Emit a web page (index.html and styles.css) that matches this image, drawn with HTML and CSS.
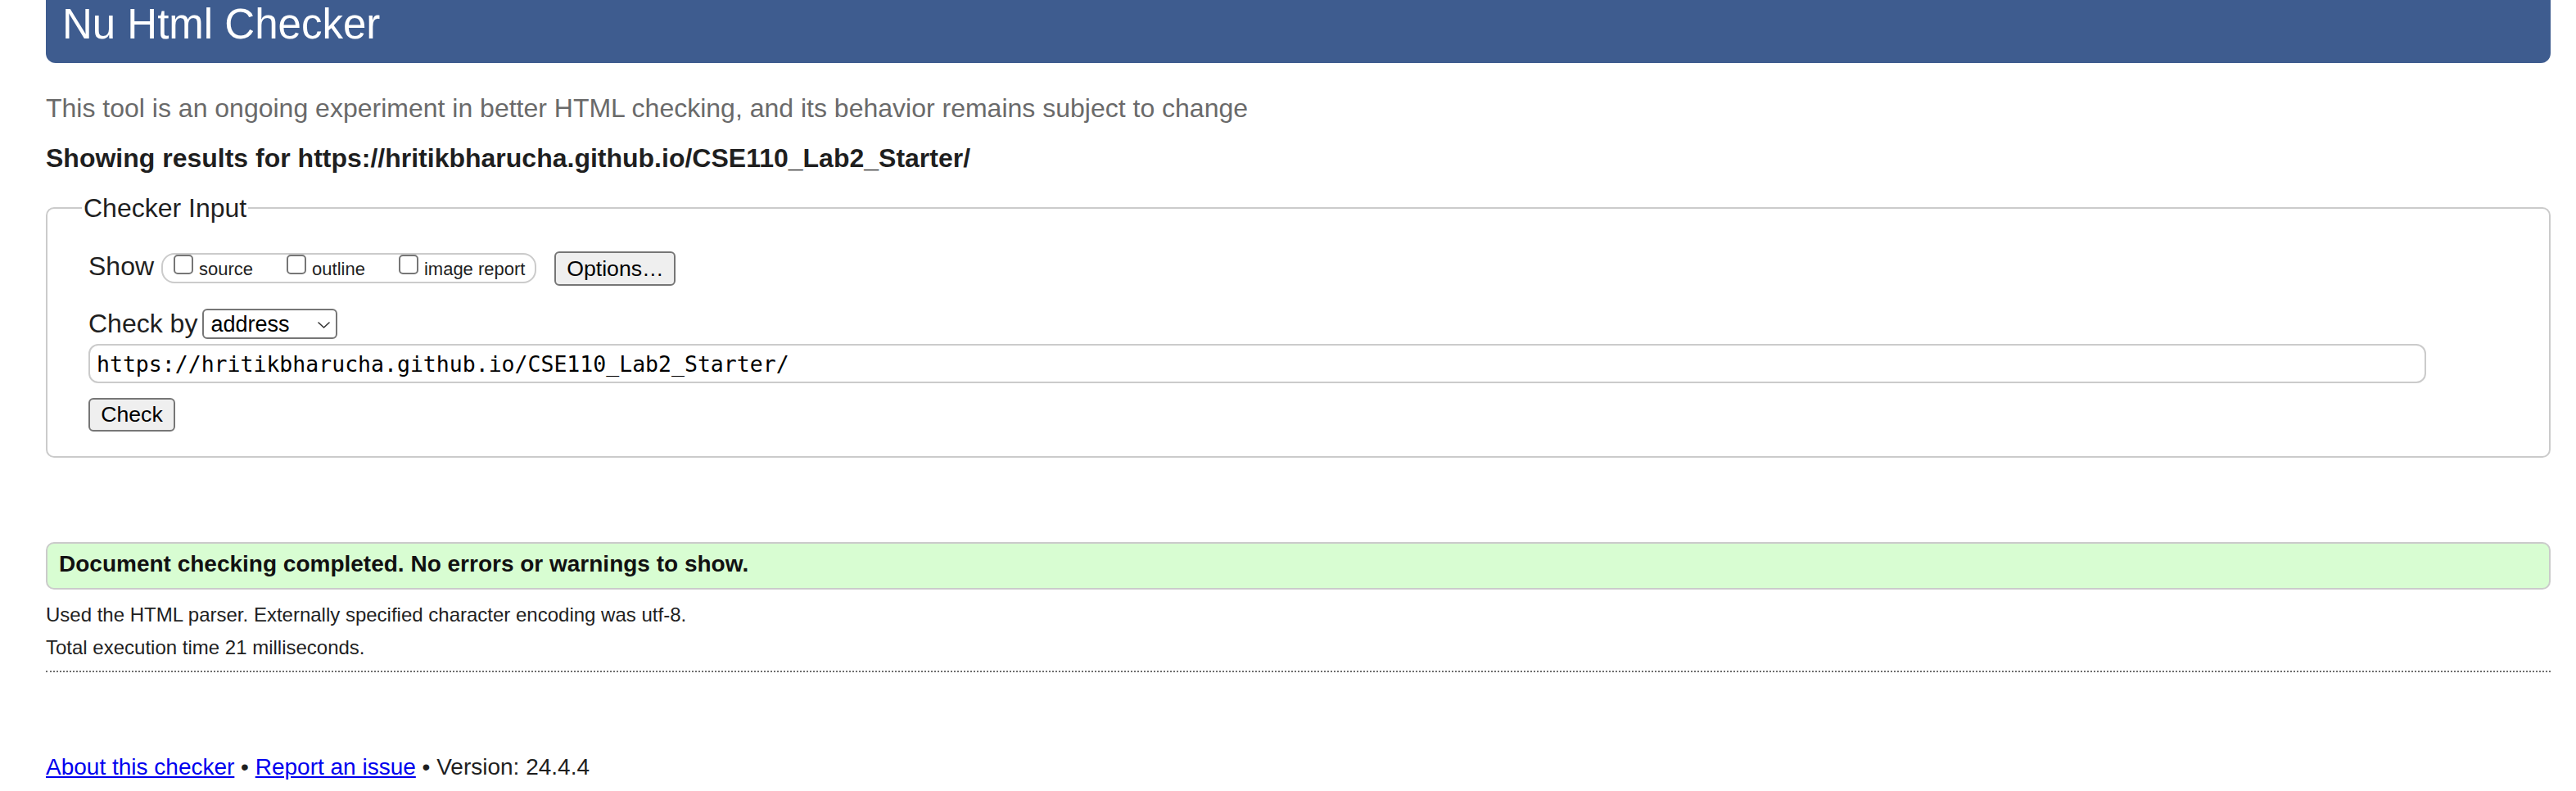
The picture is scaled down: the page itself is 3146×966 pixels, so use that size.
FILE: index.html
```html
<!DOCTYPE html>
<html lang="en">
<head>
<meta charset="utf-8">
<title>Nu Html Checker</title>
<link rel="stylesheet" href="styles.css">
</head>
<body>
<h1 class="site-title">Nu Html Checker</h1>
<p class="intro">This tool is an ongoing experiment in better HTML checking, and its behavior remains subject to change</p>
<p class="showing">Showing results for https://hritikbharucha.github.io/CSE110_Lab2_Starter/</p>
<form class="checker-form">
  <fieldset class="checker-input">
    <legend class="checker-legend">Checker Input</legend>
    <div class="row show-row">
      <span class="row-label">Show</span>
      <span class="check-group">
        <label class="check-item"><input type="checkbox" class="cb"><span class="cb-text">source</span></label>
        <label class="check-item"><input type="checkbox" class="cb"><span class="cb-text">outline</span></label>
        <label class="check-item"><input type="checkbox" class="cb"><span class="cb-text">image report</span></label>
      </span>
      <button type="button" class="btn options-btn">Options…</button>
    </div>
    <div class="row by-row">
      <span class="row-label">Check by</span>
      <span class="select-wrap">
        <select class="select"><option>address</option></select>
        <svg class="chevron" viewBox="0 0 15 8" aria-hidden="true"><path d="M1 1 L7.5 7 L14 1" fill="none" stroke="#333" stroke-width="1.6" stroke-linecap="round" stroke-linejoin="round"/></svg>
      </span>
    </div>
    <input class="url-input" type="url" value="https://hritikbharucha.github.io/CSE110_Lab2_Starter/">
    <button type="button" class="btn check-btn">Check</button>
  </fieldset>
</form>
<div class="success">Document checking completed. No errors or warnings to show.</div>
<p class="meta">Used the HTML parser. Externally specified character encoding was utf-8.</p>
<p class="meta">Total execution time 21 milliseconds.</p>
<hr class="rule">
<p class="footer"><a href="#">About this checker</a> • <a href="#">Report an issue</a> • Version: 24.4.4</p>
</body>
</html>
```

FILE: styles.css
```css
* { box-sizing: border-box; }
html { background: #fff; }
body {
  margin: 0;
  padding: 0 31px 0 56px;
  font-family: "Liberation Sans", Arial, Helvetica, sans-serif;
  color: #1f1f1f;
}
.site-title {
  margin: 0;
  height: 77px;
  padding: 0 0 0 20px;
  background: #3e5c8f;
  color: #fff;
  font-size: 51px;
  font-weight: normal;
  line-height: 60px;
  border-radius: 0 0 12px 12px;
}
.intro {
  margin: 35px 0 0;
  font-size: 32px;
  line-height: 40px;
  color: #6a6a6a;
}
.showing {
  margin: 21px 0 0;
  font-size: 32px;
  line-height: 40px;
  font-weight: bold;
}
.checker-form { margin: 21px 0 0; }
.checker-input {
  margin: 0;
  border: 2px solid #cbcbcb;
  border-radius: 10px;
  padding: 28px 0 30px 50px;
  min-width: 0;
}
.checker-legend {
  margin-left: -8px;
  padding: 0 2px;
  font-size: 32px;
  line-height: 40px;
}
.row {
  display: flex;
  align-items: flex-start;
}
.row-label {
  padding-top: 3px;
  font-size: 32px;
  line-height: 40px;
}
.show-row { height: 47px; }
.check-group {
  display: flex;
  align-items: flex-start;
  margin: 7px 0 0 9px;
  height: 37px;
  padding: 0 12px 0 13px;
  border: 2px solid #cbcbcb;
  border-radius: 16px;
}
.check-item {
  display: flex;
  align-items: flex-start;
  margin-right: 41px;
  font-size: 22px;
}
.check-item:last-child { margin-right: 0; }
.cb {
  -webkit-appearance: none;
  appearance: none;
  margin: 0;
  width: 24px;
  height: 24px;
  border: 2px solid #767676;
  border-radius: 5px;
  background: #fff;
}
.cb-text {
  margin: 5px 0 0 7px;
  line-height: 26px;
}
.btn {
  font-family: inherit;
  font-size: 26.67px;
  color: #000;
  background: #efefef;
  border: 2px solid #767676;
  border-radius: 6px;
  padding: 0;
  display: flex;
  align-items: center;
  justify-content: center;
}
.options-btn {
  margin: 5px 0 0 22px;
  width: 148px;
  height: 42px;
}
.by-row {
  margin-top: 23px;
  height: 42px;
}
.select-wrap {
  position: relative;
  margin: 5px 0 0 6px;
}
.select {
  -webkit-appearance: none;
  appearance: none;
  display: block;
  width: 165px;
  height: 37px;
  margin: 0;
  padding: 0 0 0 8px;
  font-family: inherit;
  font-size: 27px;
  color: #000;
  background: #fff;
  border: 2px solid #767676;
  border-radius: 6px;
}
.chevron {
  position: absolute;
  right: 9px;
  top: 16px;
  width: 15px;
  height: 8px;
  pointer-events: none;
}
.url-input {
  display: block;
  margin: 6px 0 0;
  width: 2855px;
  height: 48px;
  border: 2px solid #cbcbcb;
  border-radius: 12px;
  padding: 0 0 0 8px;
  font-family: "DejaVu Sans Mono", "Liberation Mono", monospace;
  font-size: 26.5px;
  color: #000;
  background: #fff;
}
.check-btn {
  margin-top: 18px;
  width: 106px;
  height: 41px;
}
.success {
  margin-top: 103px;
  height: 58px;
  border: 2px solid #cbcbcb;
  border-radius: 10px;
  background: #d8fdd2;
  padding: 0 0 4px 14px;
  font-size: 28px;
  line-height: 50px;
  font-weight: bold;
  color: #111;
}
.meta {
  margin: 17px 0 0;
  font-size: 24px;
  line-height: 28px;
}
.meta + .meta { margin-top: 12px; }
.rule {
  margin: 14px 0 0;
  height: 0;
  border: 0;
  border-top: 2px dotted #6e6e6e;
}
.footer {
  margin: 99px 0 0;
  font-size: 28px;
  line-height: 34px;
}
.footer a { color: #0000ee; }
```
